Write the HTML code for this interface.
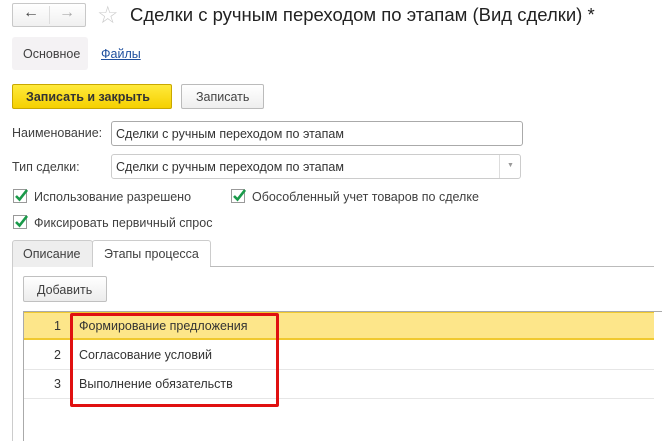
<!DOCTYPE html><html style="height:441px;overflow:hidden"><head><meta charset="utf-8"><style>
html,body{margin:0;width:662px;height:441px;overflow:hidden}
body{background:#fff;font-family:"Liberation Sans",sans-serif;font-size:12.5px;color:#404040;position:relative}
.a{position:absolute;white-space:nowrap}
.box{position:absolute;box-sizing:border-box}
.cb{position:absolute;width:14px;height:14px;border:1px solid #999;box-sizing:border-box;background:#fff}
.cb svg{position:absolute;left:0;top:-2px}
</style></head><body>
<div class="box" style="left:12px;top:3px;width:74px;height:24px;border:1px solid #c8c8c8;border-radius:2px;background:linear-gradient(#fff,#f0f0f0)"></div>
<div class="box" style="left:49px;top:6px;width:1px;height:18px;background:#ddd"></div>
<div class="a" style="left:23px;top:4px;font-size:16px;color:#444">&#8592;</div>
<div class="a" style="left:59px;top:4px;font-size:16px;color:#aaa">&#8594;</div>
<div class="a" style="left:97px;top:1px;font-size:24px;color:#ccc">&#9734;</div>
<div class="a" style="left:130px;top:4px;font-size:18.5px;color:#222">Сделки с ручным переходом по этапам (Вид сделки) *</div>
<div class="box" style="left:12px;top:37px;width:76px;height:33px;background:#f4f2f4;border-radius:3px"></div>
<div class="a" style="left:23px;top:47px">Основное</div>
<div class="a" style="left:101px;top:47px;color:#1f4f9e;text-decoration:underline">Файлы</div>
<div class="box" style="left:12px;top:84px;width:160px;height:25px;border:1px solid #c9a800;border-radius:2px;background:linear-gradient(#ffea3c,#f5d000)"></div>
<div class="a" style="left:26px;top:90px;font-weight:bold;color:#333">Записать и закрыть</div>
<div class="box" style="left:181px;top:84px;width:83px;height:25px;border:1px solid #bbb;border-radius:2px;background:linear-gradient(#fff,#eee)"></div>
<div class="a" style="left:196px;top:90px;color:#444">Записать</div>
<div class="a" style="left:12px;top:126px">Наименование:</div>
<div class="box" style="left:111px;top:121px;width:412px;height:25px;border:1px solid #aaa;border-radius:3px"></div>
<div class="a" style="left:116px;top:127px;color:#333">Сделки с ручным переходом по этапам</div>
<div class="a" style="left:12px;top:160px">Тип сделки:</div>
<div class="box" style="left:111px;top:154px;width:410px;height:25px;border:1px solid #ccc;border-radius:3px"></div>
<div class="box" style="left:499px;top:155px;width:1px;height:23px;background:#ddd"></div>
<div class="a" style="left:507px;top:162px;font-size:7px;color:#999">&#9660;</div>
<div class="a" style="left:116px;top:160px;color:#333">Сделки с ручным переходом по этапам</div>
<div class="cb" style="left:13px;top:189px"><svg width="14" height="14"><path d="M2 8 L5.5 11.5 L13 2" stroke="#1a9a4a" stroke-width="2.6" fill="none"/></svg></div>
<div class="a" style="left:34px;top:190px">Использование разрешено</div>
<div class="cb" style="left:231px;top:189px"><svg width="14" height="14"><path d="M2 8 L5.5 11.5 L13 2" stroke="#1a9a4a" stroke-width="2.6" fill="none"/></svg></div>
<div class="a" style="left:252px;top:190px">Обособленный учет товаров по сделке</div>
<div class="cb" style="left:13px;top:215px"><svg width="14" height="14"><path d="M2 8 L5.5 11.5 L13 2" stroke="#1a9a4a" stroke-width="2.6" fill="none"/></svg></div>
<div class="a" style="left:34px;top:216px">Фиксировать первичный спрос</div>
<div class="box" style="left:12px;top:240px;width:81px;height:27px;border:1px solid #ccc;border-bottom:none;background:#eee;border-radius:3px 3px 0 0"></div>
<div class="a" style="left:23px;top:247px">Описание</div>
<div class="box" style="left:92px;top:240px;width:119px;height:27px;border:1px solid #ccc;border-bottom:none;background:#fff;border-radius:3px 3px 0 0"></div>
<div class="a" style="left:104px;top:247px">Этапы процесса</div>
<div class="box" style="left:210px;top:266px;width:444px;height:1px;background:#bbb"></div>
<div class="box" style="left:12px;top:266px;width:1px;height:175px;background:#ccc"></div>
<div class="box" style="left:23px;top:276px;width:84px;height:26px;border:1px solid #c0c0c0;border-radius:2px;background:linear-gradient(#fff,#ececec)"></div>
<div class="a" style="left:37px;top:283px">Добавить</div>
<div class="box" style="left:23px;top:311px;width:660px;height:140px;border:1px solid #aaa"></div>
<div class="box" style="left:24px;top:312px;width:630px;height:28px;background:#fde68a;border-top:1px solid #f0c930;border-bottom:2px solid #f0c930"></div>
<div class="box" style="left:24px;top:369px;width:630px;height:1px;background:#e6e6e6"></div>
<div class="box" style="left:24px;top:398px;width:630px;height:1px;background:#e6e6e6"></div>
<div class="a" style="left:54px;top:319px;color:#333">1</div>
<div class="a" style="left:54px;top:348px;color:#333">2</div>
<div class="a" style="left:54px;top:377px;color:#333">3</div>
<div class="a" style="left:79px;top:319px;color:#333">Формирование предложения</div>
<div class="a" style="left:79px;top:348px;color:#333">Согласование условий</div>
<div class="a" style="left:79px;top:377px;color:#333">Выполнение обязательств</div>
<div class="box" style="left:70px;top:313px;width:209px;height:94px;border:3px solid #e01010;border-radius:2px"></div>
</body></html>
